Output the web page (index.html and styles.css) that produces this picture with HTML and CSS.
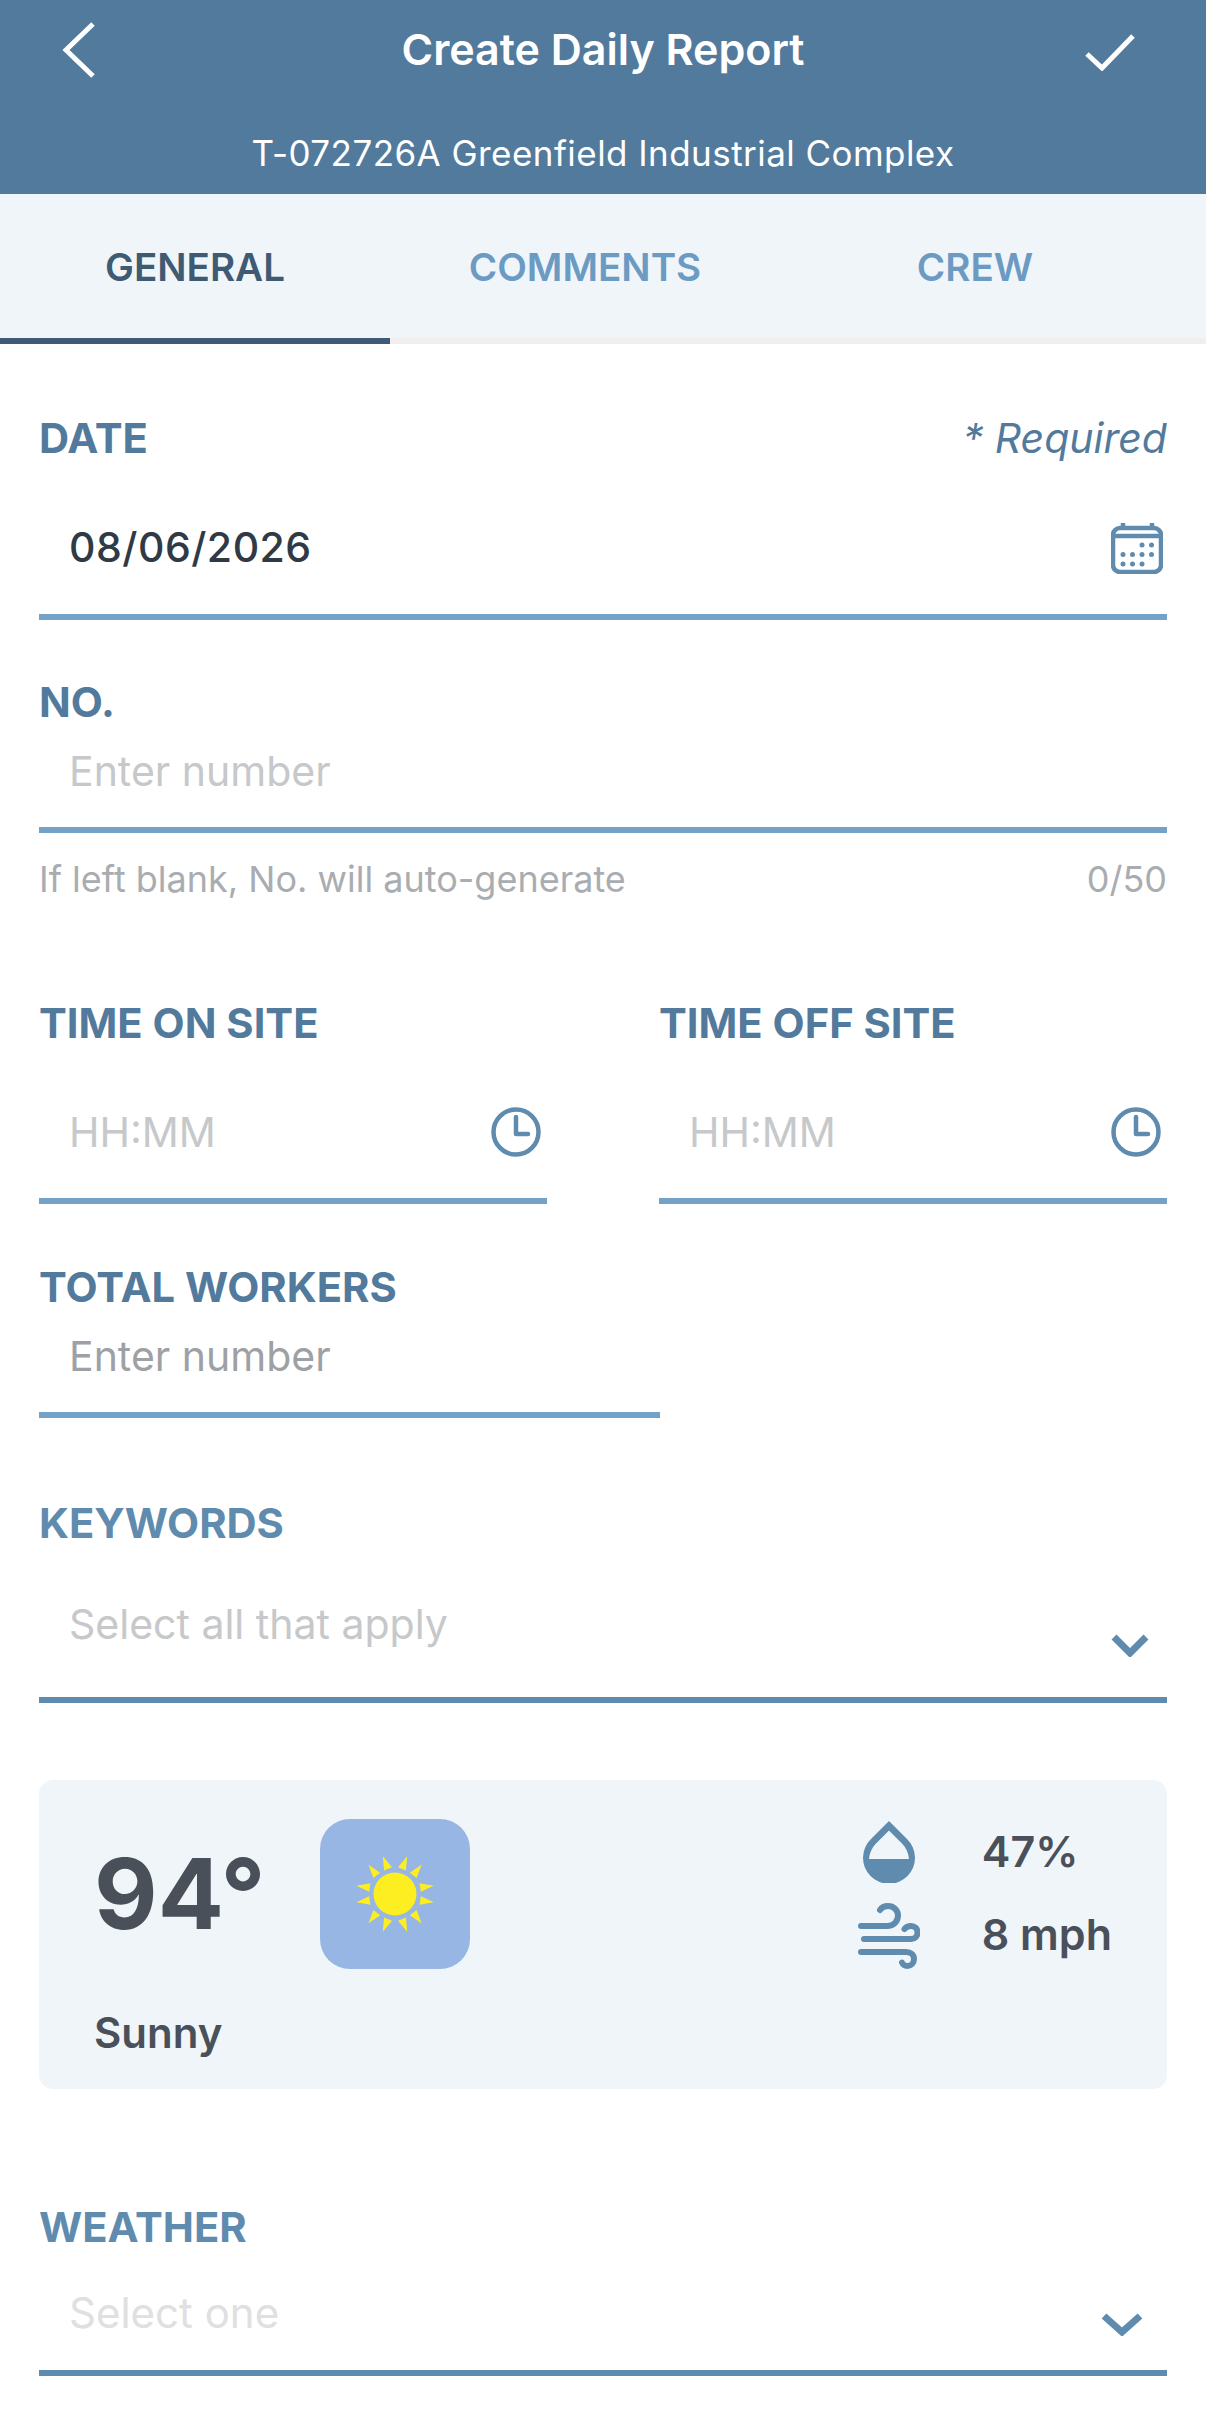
FILE: index.html
```html
<!DOCTYPE html>
<html lang="en">
<head>
  <meta charset="UTF-8" />
  <title>Create Daily Report</title>
  <link rel="stylesheet" href="styles.css">
</head>
<body>

  <header class="topbar">
    <div class="topbar-row">
      <svg class="back-icon" width="34" height="56" viewBox="0 0 34 56"><path d="M31 2 L4 28 L31 54" /></svg>
      <h1>Create Daily Report</h1>
      <svg class="check-icon" width="50" height="38" viewBox="0 0 50 38"><path d="M2 21 L17 35 L48 3" /></svg>
    </div>
    <p class="subtitle">T-072726A Greenfield Industrial Complex</p>
  </header>

  <nav class="tabs">
    <div class="tab active">GENERAL</div>
    <div class="tab">COMMENTS</div>
    <div class="tab">CREW</div>
  </nav>

  <main class="form">

    <div class="label-row date-label">
      <label>DATE</label>
      <span class="required">* Required</span>
    </div>
    <div class="control date-control">
      <span class="value">08/06/2026</span>
      <svg class="icon" width="52" height="52" viewBox="0 0 52 52">
        <rect x="2" y="6" width="48" height="44" rx="7" class="line" />
        <path d="M2 14 H50 M12 1 V6 M41 1 V6" class="line" />
        <g class="dot">
          <circle cx="31" cy="23" r="2.5" /><circle cx="40.5" cy="23" r="2.5" />
          <circle cx="12" cy="32.5" r="2.5" /><circle cx="21.5" cy="32.5" r="2.5" /><circle cx="31" cy="32.5" r="2.5" /><circle cx="40.5" cy="32.5" r="2.5" />
          <circle cx="12" cy="42" r="2.5" /><circle cx="21.5" cy="42" r="2.5" /><circle cx="31" cy="42" r="2.5" />
        </g>
      </svg>
    </div>

    <label class="no-label">NO.</label>
    <div class="control no-control">
      <span class="placeholder">Enter number</span>
    </div>
    <div class="hint-row">
      <span>If left blank, No. will auto-generate</span>
      <span>0/50</span>
    </div>

    <div class="time-grid">
      <div>
        <label>TIME ON SITE</label>
        <div class="control time-control">
          <span class="placeholder">HH:MM</span>
          <svg class="icon" width="50" height="50" viewBox="0 0 50 50">
            <circle cx="25" cy="25" r="22.5" class="line" />
            <path d="M25 10 V27 H37" class="line round" />
          </svg>
        </div>
      </div>
      <div>
        <label>TIME OFF SITE</label>
        <div class="control time-control">
          <span class="placeholder">HH:MM</span>
          <svg class="icon" width="50" height="50" viewBox="0 0 50 50">
            <circle cx="25" cy="25" r="22.5" class="line" />
            <path d="M25 10 V27 H37" class="line round" />
          </svg>
        </div>
      </div>
    </div>

    <div class="workers">
      <label>TOTAL WORKERS</label>
      <div class="control workers-control">
        <span class="placeholder dark">Enter number</span>
      </div>
    </div>

    <label class="keywords-label">KEYWORDS</label>
    <div class="control keywords-control strong">
      <span class="placeholder">Select all that apply</span>
      <svg class="icon chevron" width="38" height="24" viewBox="0 0 38 24"><path d="M3 4 L19 20 L35 4" /></svg>
    </div>

    <section class="weather-card">
      <div class="weather-left">
        <div class="weather-top">
          <span class="temp">94°</span>
          <div class="sun-tile">
            <svg width="80" height="80" viewBox="-40 -40 80 80">
              <defs><polygon id="ray" points="-2,-39.500 4,-26.500 -4.500,-25.500" /></defs>
              <circle r="21.5" fill="#fdee21" />
              <g fill="#fdee21">
                <use href="#ray" transform="rotate(-15)" />
                <use href="#ray" transform="rotate(15) scale(-1,1)" />
                <use href="#ray" transform="rotate(45)" />
                <use href="#ray" transform="rotate(75) scale(-1,1)" />
                <use href="#ray" transform="rotate(105)" />
                <use href="#ray" transform="rotate(135) scale(-1,1)" />
                <use href="#ray" transform="rotate(165)" />
                <use href="#ray" transform="rotate(195) scale(-1,1)" />
                <use href="#ray" transform="rotate(225)" />
                <use href="#ray" transform="rotate(255) scale(-1,1)" />
                <use href="#ray" transform="rotate(285)" />
                <use href="#ray" transform="rotate(315) scale(-1,1)" />
              </g>
            </svg>
          </div>
        </div>
        <div class="condition">Sunny</div>
      </div>
      <div class="weather-right">
        <div class="stat-icons">
          <svg width="52" height="62" viewBox="0 0 52 62"><path fill-rule="evenodd" d="M26 0 L8 18 A26 26 0 1 0 44 18 Z M26 9.5 L39 22.5 C43 26.5 45.5 32 46 38 H6 C6.5 32 9 26.5 13 22.5 Z" fill="#5f8bae" /></svg>
          <svg class="wind" width="62" height="66" viewBox="0 0 62 66">
            <path d="M3 23 H29 C36 23 40 18 40 12.500 C40 7 35.500 3 30 3 C26.500 3 23.500 4.500 22 7 M6 36 H53 C57 36 59.500 33 59.500 29.500 C59.500 26 57 23 53 23 C50 23 48 24 46.500 26 M3 49 H48 C53 49 56 52 56 56 C56 60 53 63 49.500 63 C47 63 45 62 44 59.500" />
          </svg>
        </div>
        <div class="stat-values">
          <span>47%</span>
          <span>8 mph</span>
        </div>
      </div>
    </section>

    <label class="weather-label">WEATHER</label>
    <div class="control weather-control strong">
      <span class="placeholder light">Select one</span>
      <svg class="icon chevron" width="42" height="24" viewBox="0 0 42 24"><path d="M3 4 L21 20 L39 4" /></svg>
    </div>

  </main>

</body>
</html>
```

FILE: styles.css
```css
* {
  box-sizing: border-box;
}
body {
  margin: 0;
  background: #fff;
  font-family: Inter, sans-serif;
  color: #2f3a46;
}
h1, p {
  margin: 0;
}

.topbar {
  height: 194px;
  background: #527a9c;
  color: #fff;
  text-align: center;
}
.topbar-row {
  height: 100px;
  padding: 21px 62px 0 62px;
  display: grid;
  grid-template-columns: 1fr auto 1fr;
  align-items: start;
}
.topbar-row h1 {
  font-size: 43px;
  font-weight: 600;
  line-height: 56px;
}
.back-icon path, .check-icon path {
  fill: none;
  stroke: #fff;
  stroke-width: 5;
}
.back-icon {
  margin-top: 1px;
}
.check-icon {
  margin: 12px 9px 0 0;
  justify-self: end;
}
.subtitle {
  font-size: 35px;
  line-height: 44px;
  padding-top: 31px;
  letter-spacing: 0.45px;
}

.tabs {
  display: grid;
  grid-template-columns: 390px 390px 390px 36px;
  height: 150px;
  background: #f0f5f9;
  border-bottom: 6px solid #f0eeee;
}
.tab {
  height: 150px;
  padding-top: 50px;
  line-height: 46px;
  text-align: center;
  font-size: 38.6px;
  font-weight: 600;
  color: #6b9bc3;
}
.tab.active {
  color: #3f5a73;
  border-bottom: 6px solid #3f5a73;
}

.form {
  padding: 72px 39px 0 39px;
}
label {
  display: block;
  font-size: 41.7px;
  font-weight: 700;
  line-height: 44px;
  color: #527a9c;
}
.keywords-label, .weather-label {
  color: #5f8bae;
}
.label-row {
  display: flex;
  justify-content: space-between;
}
.required {
  font-size: 41px;
  font-style: italic;
  line-height: 44px;
  color: #527a9c;
}

.control {
  display: flex;
  justify-content: space-between;
  align-items: center;
  padding-left: 30px;
  border-bottom: 6px solid #74a1c6;
}
.control.strong {
  border-bottom-color: #5f8bae;
}
.value {
  font-size: 41px;
  font-weight: 500;
  letter-spacing: 0.5px;
}
.placeholder {
  font-size: 41px;
  color: #c6c8ca;
}
.placeholder.dark {
  color: #9da1a5;
}
.placeholder.light {
  font-size: 42px;
  color: #e0e0e0;
}
.icon {
  flex: none;
}
.line {
  fill: none;
  stroke: #5f8bae;
  stroke-width: 4.5;
}
.line.round {
  stroke-linecap: round;
  stroke-linejoin: round;
}
.dot {
  fill: #5f8bae;
}
.chevron path {
  fill: none;
  stroke: #5f8bae;
  stroke-width: 7;
}

.date-control {
  margin-top: 20px;
  height: 140px;
  padding-right: 4px;
}
.date-control .icon {
  margin-top: 2px;
}

.no-label {
  margin-top: 60px;
}
.no-control {
  height: 109px;
  padding-bottom: 10px;
}
.hint-row {
  display: flex;
  justify-content: space-between;
  margin-top: 26px;
  font-size: 36px;
  line-height: 40px;
  color: #a9adb1;
}

.time-grid {
  display: grid;
  grid-template-columns: 508px 508px;
  justify-content: space-between;
  margin-top: 102px;
}
.time-control {
  height: 159px;
  padding-top: 20px;
  padding-right: 6px;
}

.workers {
  width: 621px;
  margin-top: 61px;
}
.workers-control {
  height: 109px;
  padding-bottom: 10px;
}

.keywords-label {
  margin-top: 83px;
}
.keywords-control {
  height: 158px;
  padding-top: 48px;
  padding-right: 18px;
}
.keywords-control .placeholder {
  margin-bottom: 42px;
}

.weather-card {
  display: flex;
  justify-content: space-between;
  height: 309px;
  margin-top: 77px;
  padding: 39px 55px 0 55px;
  border-radius: 14px;
  background: #f0f5f9;
}
.weather-top {
  display: flex;
  gap: 57px;
}
.temp {
  font-size: 98px;
  font-weight: 700;
  line-height: 150px;
  width: 169px;
  color: #4a5059;
}
.sun-tile {
  width: 150px;
  height: 150px;
  border-radius: 30px;
  background: #98b6e4;
  display: flex;
  align-items: center;
  justify-content: center;
}
.condition {
  margin-top: 41px;
  font-size: 42px;
  font-weight: 600;
  line-height: 46px;
  color: #4a5059;
}
.weather-right {
  display: flex;
  gap: 62px;
}
.stat-icons {
  display: flex;
  flex-direction: column;
  align-items: center;
  gap: 20px;
  margin-top: 2px;
}
.wind path {
  fill: none;
  stroke: #5f8bae;
  stroke-width: 6;
  stroke-linecap: round;
}
.stat-values {
  display: flex;
  flex-direction: column;
  gap: 39px;
  margin-top: 10px;
  font-size: 43px;
  font-weight: 600;
  line-height: 44px;
  color: #4a5059;
}

.weather-label {
  margin-top: 116px;
}
.weather-control {
  height: 127px;
  padding-top: 29px;
  padding-right: 24px;
}
.weather-control .placeholder {
  margin-bottom: 24px;
}
```
